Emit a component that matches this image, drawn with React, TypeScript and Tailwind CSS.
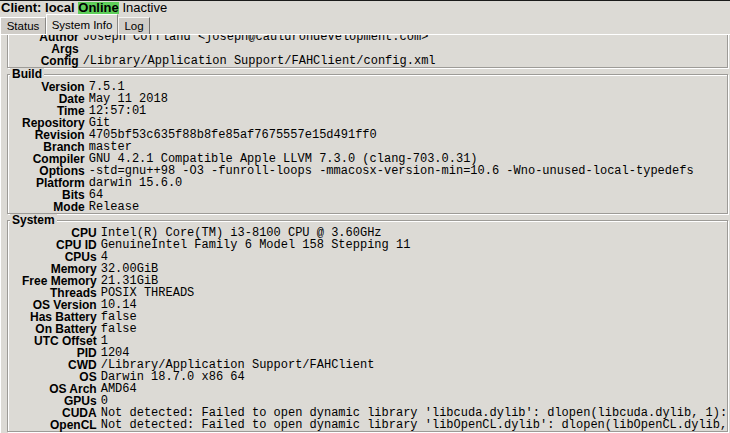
import { Fragment } from "react";
import clsx from "clsx";

type Row = [string, string];

const clientRows: Row[] = [
  ["Website", "https://foldingathome.org/"],
  ["Copyright", "(c) 2009-2018 foldingathome.org"],
  ["Author", "Joseph Coffland <joseph@cauldrondevelopment.com>"],
  ["Args", ""],
  ["Config", "/Library/Application Support/FAHClient/config.xml"],
];

const buildRows: Row[] = [
  ["Version", "7.5.1"],
  ["Date", "May 11 2018"],
  ["Time", "12:57:01"],
  ["Repository", "Git"],
  ["Revision", "4705bf53c635f88b8fe85af7675557e15d491ff0"],
  ["Branch", "master"],
  ["Compiler", "GNU 4.2.1 Compatible Apple LLVM 7.3.0 (clang-703.0.31)"],
  ["Options", "-std=gnu++98 -O3 -funroll-loops -mmacosx-version-min=10.6 -Wno-unused-local-typedefs"],
  ["Platform", "darwin 15.6.0"],
  ["Bits", "64"],
  ["Mode", "Release"],
];

const systemRows: Row[] = [
  ["CPU", "Intel(R) Core(TM) i3-8100 CPU @ 3.60GHz"],
  ["CPU ID", "GenuineIntel Family 6 Model 158 Stepping 11"],
  ["CPUs", "4"],
  ["Memory", "32.00GiB"],
  ["Free Memory", "21.31GiB"],
  ["Threads", "POSIX THREADS"],
  ["OS Version", "10.14"],
  ["Has Battery", "false"],
  ["On Battery", "false"],
  ["UTC Offset", "1"],
  ["PID", "1204"],
  ["CWD", "/Library/Application Support/FAHClient"],
  ["OS", "Darwin 18.7.0 x86 64"],
  ["OS Arch", "AMD64"],
  ["GPUs", "0"],
  ["CUDA", "Not detected: Failed to open dynamic library 'libcuda.dylib': dlopen(libcuda.dylib, 1): image not found"],
  ["OpenCL", "Not detected: Failed to open dynamic library 'libOpenCL.dylib': dlopen(libOpenCL.dylib, 1): image not found"],
];

function Section({ title, rows, className }: { title: string; rows: Row[]; className?: string }) {
  return (
    <fieldset
      className={clsx(
        "min-w-0 border border-[#9d9b97] shadow-[inset_1px_1px_0_#fff,1px_1px_0_#fff]",
        className
      )}
    >
      <legend className="ml-[2px] px-[2px] bg-[#dcdad5] text-[12px] leading-[13px] font-bold">
        {title}
      </legend>
      <div className="grid grid-cols-[auto_minmax(0,1fr)] gap-x-[4px] pl-[14px]">
        {rows.map(([label, value]) => (
          <Fragment key={label}>
            <div className="h-[12px] text-right text-[12px] leading-[12px] font-bold whitespace-nowrap">
              {label}
            </div>
            <div className="h-[12px] font-['Liberation_Mono',monospace] text-[12px] leading-[13.5px] whitespace-nowrap">
              {value}
            </div>
          </Fragment>
        ))}
      </div>
    </fieldset>
  );
}

export default function App() {
  return (
    <div className="flex flex-col w-[730px] h-[433px] overflow-hidden bg-[#dcdad5] text-black border-t border-[#1a1a1a] font-['Liberation_Sans',Arial,sans-serif]">
      <div className="h-[13px] pl-[1px] text-[13px] leading-[13px] whitespace-nowrap">
        <span className="font-bold">Client: local</span>{" "}
        <span className="inline-block leading-[12px] font-bold bg-[#5fcf5a]">Online</span>{" "}
        <span>Inactive</span>
      </div>

      <div className="flex items-end h-[20px] text-[11.5px] leading-[14px]">
        <div className="w-[46px] h-[17px] pt-[1px] text-center bg-[#d0cdc8] border-t border-l border-white border-r border-r-[#8a8885]">
          Status
        </div>
        <div className="relative z-10 -mb-px w-[72px] h-[21px] pt-[3px] text-center bg-[#dcdad5] border-t border-l border-white border-r border-r-[#8a8885]">
          System Info
        </div>
        <div className="w-[32px] h-[17px] pt-[1px] text-center bg-[#d0cdc8] border-t border-l border-[#f4f3f1] border-r border-r-[#6f6d6a]">
          Log
        </div>
      </div>

      <div className="flex-1 min-h-0 overflow-hidden border-t border-l border-white pl-[6px] pr-[2px]">
        <Section title="Client" rows={clientRows} className="-mt-[41px]" />
        <Section title="Build" rows={buildRows} />
        <Section title="System" rows={systemRows} />
      </div>
    </div>
  );
}
